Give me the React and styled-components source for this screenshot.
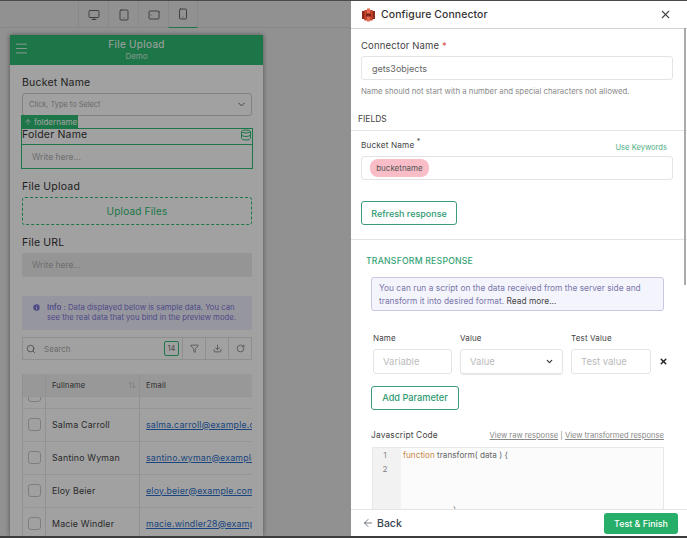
import React from 'react'
import styled, { createGlobalStyle } from 'styled-components'
import {
  Monitor, Tablet, Smartphone, Menu, ChevronDown, ArrowUp, Database, Search,
  Info, Filter, Download, RotateCw, ArrowLeft, X, ArrowUpDown,
} from 'lucide-react'

const GlobalStyle = createGlobalStyle`
  html, body { margin: 0; padding: 0; background: #fff; }
  * { box-sizing: border-box; }
  body { font-family: Inter, "Open Sans", "Liberation Sans", sans-serif; }
`

const Screen = styled.div`
  display: flex;
  width: 687px;
  height: 538px;
  overflow: hidden;
  border-top: 1px solid #4a4a4a;
  border-bottom: 2px solid #3c3c3c;
`

/* left side, the builder behind the drawer */
const Builder = styled.div`
  position: relative;
  flex: 0 0 351px;
  display: flex;
  flex-direction: column;
  background: #e6e6e6;
  overflow: hidden;
`
const Dim = styled.div`
  position: absolute;
  inset: 0;
  background: rgba(0, 0, 0, 0.37);
`
const Toolbar = styled.div`
  display: flex;
  flex: 0 0 27px;
  padding-left: 78px;
  border-bottom: 1px solid #d6d6d6;
`
const DeviceTab = styled.div`
  width: 30px;
  display: flex;
  align-items: center;
  justify-content: center;
  color: #666;
  border-left: 1px solid #dadada;
  border-right: ${p => (p.$active ? '1px solid #dadada' : 'none')};
  border-bottom: ${p => (p.$active ? '1px solid #2dbc72' : 'none')};
  margin-bottom: -1px;
`
const LandscapeIcon = styled(Tablet)`
  transform: rotate(90deg);
`
const AppCard = styled.div`
  width: 253px;
  margin: 7px 0 0 10px;
  flex: 1;
  background: #fff;
  box-shadow: 0 0 5px rgba(0, 0, 0, 0.45);
  overflow: hidden;
`
const AppHeader = styled.div`
  position: relative;
  height: 30px;
  background: #2dbc72;
  color: #fff;
  text-align: center;
  padding-top: 3px;
`
const HeaderMenu = styled(Menu)`
  position: absolute;
  left: 4px;
  top: 6px;
`
const AppTitle = styled.div`
  font-size: 10px;
  line-height: 13px;
  letter-spacing: 0.3px;
`
const AppSub = styled.div`
  font-size: 8px;
  line-height: 10px;
  opacity: 0.75;
`
const AppBody = styled.div`
  display: flex;
  flex-direction: column;
  padding: 10px 11px 0 12px;
`
const FieldLabel = styled.div`
  padding-top: 1px;
  font-size: 10.5px;
  line-height: 14px;
  letter-spacing: 0.2px;
  color: #333;
  margin-bottom: 3px;
`
const SelectBox = styled.div`
  height: 23px;
  border: 1px solid #ccc;
  border-radius: 3px;
  display: flex;
  align-items: center;
  justify-content: space-between;
  padding: 0 4px 0 6px;
  font-size: 7.4px;
  color: #aaa;
`
const SelectedWrap = styled.div`
  position: relative;
  margin: 12px -1px 10px -1px;
  border: 1px solid #2dbc72;
  height: 41px;
`
const Tag = styled.div`
  position: absolute;
  left: -1px;
  top: -14px;
  height: 13px;
  width: 57px;
  background: #2dbc72;
  color: #fff;
  display: flex;
  align-items: center;
  gap: 2px;
  padding-left: 3px;
  font-size: 8px;
`
const DbIcon = styled(Database)`
  position: absolute;
  right: 0;
  top: 0;
  color: #2dbc72;
`
const SelectedLabel = styled(FieldLabel)`
  margin: -2px 0 2px 0;
`
const WriteInput = styled.div`
  height: ${p => p.$h || 24}px;
  border-top: ${p => (p.$plain ? '0' : '1px solid #2dbc72')};
  background: ${p => (p.$disabled ? '#ececec' : 'transparent')};
  border-radius: ${p => (p.$disabled ? '2px' : '0')};
  display: flex;
  align-items: center;
  padding-left: 10px;
  font-size: 8.5px;
  color: #b0b0b0;
`
const UploadBox = styled.div`
  height: 28px;
  border: 1px dashed #2dbc72;
  border-radius: 3px;
  display: flex;
  align-items: center;
  justify-content: center;
  color: #2dbc72;
  font-size: 10px;
  letter-spacing: 0.2px;
  margin-bottom: 10px;
`
const SampleNote = styled.div`
  display: flex;
  gap: 6px;
  margin-top: 19px;
  height: 34px;
  padding: 7px 8px 0 10px;
  background: #eeeefc;
  color: #7c75d8;
  font-size: 7.7px;
  line-height: 10px;
  letter-spacing: 0.02px;
  strong { font-weight: 600; }
`
const NoteIcon = styled(Info)`
  flex: none;
`
const SearchBar = styled.div`
  display: flex;
  align-items: center;
  height: 23px;
  margin-top: 7px;
  border: 1px solid #e3e3e3;
  color: #777;
`
const SearchIcon = styled(Search)`
  margin: 0 6px 0 3px;
`
const SearchText = styled.div`
  flex: 1;
  font-size: 8px;
  color: #aaa;
  padding-left: 2px;
`
const CountBadge = styled.div`
  width: 15px;
  height: 15px;
  margin-right: 3px;
  border: 1px solid #2dbc72;
  border-radius: 2px;
  font-size: 7.5px;
  display: flex;
  align-items: center;
  justify-content: center;
`
const BarButton = styled.div`
  width: 23px;
  height: 100%;
  display: flex;
  align-items: center;
  justify-content: center;
  border-left: 1px solid #e3e3e3;
`
const Table = styled.div`
  margin-top: 14px;
  width: 230px;
  border-left: 1px solid #e6e6e6;
  overflow: hidden;
`
const Row = styled.div`
  display: grid;
  grid-template-columns: 22px 94px 113px;
  height: ${p => p.$h}px;
  background: ${p => (p.$head ? '#f1f1f1' : 'transparent')};
  border-bottom: 1px solid #ececec;
`
const Cell = styled.div`
  display: flex;
  align-items: center;
  justify-content: ${p => (p.$check ? 'center' : 'flex-start')};
  padding-left: ${p => (p.$check ? 0 : 6)}px;
  padding-right: ${p => (p.$sort ? 3 : 0)}px;
  padding-bottom: ${p => (p.$head ? 0 : 2)}px;
  font-size: ${p => (p.$head ? 7.5 : 8.8)}px;
  letter-spacing: 0.2px;
  color: #444;
  white-space: nowrap;
  overflow: hidden;
  border-left: ${p => (p.$check ? 'none' : '1px solid #e6e6e6')};
  a { color: #2c6fc9; text-decoration: underline; }
`
const HeadName = styled.span`
  flex: 1;
`
const SortIcon = styled(ArrowUpDown)`
  color: #c4c4c4;
`
const CheckBox = styled.div`
  width: 13px;
  height: 13px;
  border: 1px solid #c8c8c8;
  border-radius: 3px;
  margin-top: ${p => p.$cut || 0}px;
`

/* right side, the drawer */
const Drawer = styled.div`
  position: relative;
  flex: 1;
  display: flex;
  flex-direction: column;
  background: #fff;
  color: #444;
`
const DrawerHead = styled.div`
  flex: 0 0 28px;
  display: flex;
  align-items: center;
  padding: 0 15px 0 11px;
  border-bottom: 1px solid #d2d2d2;
`
const DrawerTitle = styled.div`
  flex: 1;
  margin-left: 6px;
  font-size: 10.4px;
  font-weight: 500;
  letter-spacing: 0.12px;
  color: #333;
`
const Scroller = styled.div`
  flex: 1;
  overflow: hidden;
  display: flex;
  flex-direction: column;
`
const ScrollThumb = styled.div`
  position: absolute;
  right: 1px;
  top: 27px;
  width: 2px;
  height: 257px;
  background: #aaa;
`
const Section = styled.div`
  padding: ${p => p.$pad || '0 14px 0 10px'};
  border-bottom: ${p => (p.$line ? '1px solid #e4e4e4' : 'none')};
`
const Label = styled.div`
  font-size: ${p => p.$size || 10}px;
  line-height: 13px;
  letter-spacing: 0.15px;
  color: #444;
  margin-bottom: ${p => p.$gap || 0}px;
  em { color: #e05050; font-style: normal; }
  sup { font-size: 7px; line-height: 0; }
`
const TextBox = styled.div`
  height: 24px;
  border: 1px solid #e4e4e4;
  border-radius: 3px;
  display: flex;
  align-items: center;
  padding-left: ${p => p.$left || 10}px;
  font-size: 9px;
  color: #666;
`
const Hint = styled.div`
  margin-top: 6px;
  font-size: 7.8px;
  line-height: 11px;
  color: #8a8a8a;
  white-space: nowrap;
`
const FieldsTitle = styled.div`
  margin-top: 17px;
  padding: 0 0 5px 7px;
  font-size: 8.5px;
  line-height: 11px;
  color: #444;
  border-bottom: 1px solid #e4e4e4;
`
const BucketHead = styled.div`
  display: flex;
  justify-content: space-between;
  align-items: flex-end;
  margin: 8px 6px 4px 0;
`
const KeywordLink = styled.div`
  font-size: 7.6px;
  color: #4fae86;
`
const Chip = styled.div`
  width: 59px;
  height: 18px;
  display: flex;
  align-items: center;
  justify-content: center;
  border-radius: 8px;
  background: #f9bdc8;
  font-size: 8px;
  color: #555;
`
const OutlineButton = styled.div`
  display: inline-flex;
  align-items: center;
  justify-content: center;
  width: ${p => p.$w}px;
  height: 24px;
  margin-top: ${p => p.$top || 0}px;
  border: 1px solid #3d9b78;
  border-radius: 3px;
  color: #2f9a70;
  font-size: ${p => p.$size}px;
  font-weight: 500;
`
const TransformTitle = styled.div`
  margin: 15px 0 10px 15px;
  font-size: 8.7px;
  line-height: 12px;
  font-weight: 500;
  letter-spacing: 0.2px;
  color: #37a377;
`
const ScriptNote = styled.div`
  margin-left: 20px;
  width: 293px;
  height: 34px;
  padding: 4px 7px;
  border: 1px solid #c9c7e2;
  border-radius: 3px;
  background: #f4f4fd;
  color: #7b78a8;
  font-size: 8.4px;
  line-height: 12.5px;
  span { color: #444; }
`
const ParamGrid = styled.div`
  display: grid;
  grid-template-columns: 79px 103px 80px 20px;
  column-gap: 8px;
  align-items: center;
  margin: 21px 0 11px 22px;
`
const ParamBox = styled.div`
  height: 25px;
  border: 1px solid #e4e4e4;
  border-radius: 3px;
  display: flex;
  align-items: center;
  justify-content: space-between;
  padding: 0 8px 0 9px;
  font-size: 9.5px;
  color: #bbb;
  box-shadow: ${p => (p.$select ? '0 1px 1px rgba(0,0,0,.1)' : 'none')};
`
const SelectArrow = styled(ChevronDown)`
  color: #333;
`
const RemoveIcon = styled(X)`
  margin-top: -1px;
  color: #222;
`
const ParamAction = styled.div`
  margin-left: 20px;
`
const CodeHead = styled.div`
  display: flex;
  justify-content: space-between;
  align-items: center;
  margin: 19px 23px 5px 20px;
`
const ViewLinks = styled.div`
  font-size: 7.6px;
  color: #888;
  a { color: #888; text-decoration: underline; }
`
const Editor = styled.div`
  margin-left: 21px;
  width: 292px;
  flex: 1;
  display: flex;
  border: 1px solid #e8e8e8;
  background: #fbfbfb;
  font-size: 8.2px;
`
const Gutter = styled.div`
  width: 28px;
  background: #f2f2f2;
  color: #888;
  text-align: center;
  line-height: 14px;
  padding: 0 4px 0 0;
`
const CodeLines = styled.div`
  padding-left: 2px;
  line-height: 14px;
  color: #666;
  b { font-weight: 400; color: #c98a4a; }
`
const ClosingBrace = styled.div`
  margin: 41px 0 0 50px;
`
const DrawerFoot = styled.div`
  position: relative;
  flex: 0 0 27px;
  display: flex;
  align-items: center;
  justify-content: space-between;
  padding: 0 9px 0 11px;
  background: #fff;
  border-top: 1px solid #e4e4e4;
`
const BackLink = styled.div`
  display: flex;
  align-items: center;
  gap: 3px;
  font-size: 10.5px;
  font-weight: 500;
  color: #3a4250;
`
const FinishButton = styled.div`
  width: 74px;
  height: 21px;
  border-radius: 3px;
  background: #27ae68;
  color: #fff;
  font-size: 8.9px;
  font-weight: 500;
  display: flex;
  align-items: center;
  justify-content: center;
`

const rows = [
  ['Salma Carroll', 'salma.carroll@example.com'],
  ['Santino Wyman', 'santino.wyman@example.com'],
  ['Eloy Beier', 'eloy.beier@example.com'],
  ['Macie Windler', 'macie.windler28@example.com'],
]

function BucketLogo() {
  return (
    <svg width="13" height="14" viewBox="0 0 13 14">
      <path d="M2.5 2 L10.5 2 L12 7 L10.5 12.5 L2.5 12.5 L1 7 Z" fill="#c8432b" />
      <rect x="0" y="3" width="2.4" height="8" fill="#8c2a1c" />
      <rect x="10.6" y="3" width="2.4" height="8" fill="#8c2a1c" />
      <rect x="5" y="0.5" width="3" height="13" fill="#e26a50" />
      <rect x="4" y="5.5" width="5" height="3" fill="#7d2416" />
    </svg>
  )
}

function LeftPane() {
  return (
    <Builder>
      <Toolbar>
        <DeviceTab><Monitor size={12} /></DeviceTab>
        <DeviceTab><Tablet size={12} /></DeviceTab>
        <DeviceTab><LandscapeIcon size={12} /></DeviceTab>
        <DeviceTab $active><Smartphone size={12} /></DeviceTab>
      </Toolbar>
      <AppCard>
        <AppHeader>
          <HeaderMenu size={15} strokeWidth={1.3} />
          <AppTitle>File Upload</AppTitle>
          <AppSub>Demo</AppSub>
        </AppHeader>
        <AppBody>
          <FieldLabel>Bucket Name</FieldLabel>
          <SelectBox>
            Click, Type to Select
            <ChevronDown size={11} color="#555" />
          </SelectBox>
          <SelectedWrap>
            <Tag><ArrowUp size={8} />foldername</Tag>
            <DbIcon size={12} />
            <SelectedLabel>Folder Name</SelectedLabel>
            <WriteInput>Write here...</WriteInput>
          </SelectedWrap>
          <FieldLabel>File Upload</FieldLabel>
          <UploadBox>Upload Files</UploadBox>
          <FieldLabel>File URL</FieldLabel>
          <WriteInput $plain $disabled>Write here...</WriteInput>
          <SampleNote>
            <NoteIcon size={9} fill="#7c75d8" color="#fff" />
            <div><strong>Info</strong> : Data displayed below is sample data. You can see the real data that you bind in the preview mode.</div>
          </SampleNote>
          <SearchBar>
            <SearchIcon size={10} />
            <SearchText>Search</SearchText>
            <CountBadge>14</CountBadge>
            <BarButton><Filter size={9} /></BarButton>
            <BarButton><Download size={9} /></BarButton>
            <BarButton><RotateCw size={9} /></BarButton>
          </SearchBar>
          <Table>
            <Row $head $h={23}>
              <Cell $check $head />
              <Cell $head $sort>
                <HeadName>Fullname</HeadName>
                <SortIcon size={8} />
              </Cell>
              <Cell $head>Email</Cell>
            </Row>
            <Row $h={12}>
              <Cell $check><CheckBox $cut={-13} /></Cell>
              <Cell />
              <Cell />
            </Row>
            {rows.map(([name, email]) => (
              <Row $h={33} key={name}>
                <Cell $check><CheckBox /></Cell>
                <Cell>{name}</Cell>
                <Cell><a>{email}</a></Cell>
              </Row>
            ))}
          </Table>
        </AppBody>
      </AppCard>
      <Dim />
    </Builder>
  )
}

function RightPane() {
  return (
    <Drawer>
      <DrawerHead>
        <BucketLogo />
        <DrawerTitle>Configure Connector</DrawerTitle>
        <X size={13} color="#444" />
      </DrawerHead>
      <Scroller>
        <Section $pad="10px 14px 0 10px">
          <Label $size={9.5} $gap={4}>Connector Name <em>*</em></Label>
          <TextBox>gets3objects</TextBox>
          <Hint>Name should not start with a number and special characters not allowed.</Hint>
        </Section>
        <FieldsTitle>FIELDS</FieldsTitle>
        <Section $pad="0 14px 14px 10px" $line>
          <BucketHead>
            <Label $size={8.2}>Bucket Name <sup>*</sup></Label>
            <KeywordLink>Use Keywords</KeywordLink>
          </BucketHead>
          <TextBox $left={8}><Chip>bucketname</Chip></TextBox>
          <OutlineButton $w={96} $size={9} $top={21}>Refresh response</OutlineButton>
        </Section>
        <TransformTitle>TRANSFORM RESPONSE</TransformTitle>
        <ScriptNote>
          You can run a script on the data received from the server side and transform it into desired format. <span>Read more...</span>
        </ScriptNote>
        <ParamGrid>
          <Label $size={8} $gap={4}>Name</Label>
          <Label $size={8} $gap={4}>Value</Label>
          <Label $size={8} $gap={4}>Test Value</Label>
          <div />
          <ParamBox>Variable</ParamBox>
          <ParamBox $select>Value<SelectArrow size={9} strokeWidth={3} /></ParamBox>
          <ParamBox>Test value</ParamBox>
          <RemoveIcon size={9} strokeWidth={4} />
        </ParamGrid>
        <ParamAction><OutlineButton $w={88} $size={9.2}>Add Parameter</OutlineButton></ParamAction>
        <CodeHead>
          <Label $size={8.4}>Javascript Code</Label>
          <ViewLinks><a>View raw response</a> | <a>View transformed response</a></ViewLinks>
        </CodeHead>
        <Editor>
          <Gutter>1<br />2</Gutter>
          <CodeLines>
            <b>function</b> transform( data ) {'{'}
            <ClosingBrace>{'}'}</ClosingBrace>
          </CodeLines>
        </Editor>
      </Scroller>
      <ScrollThumb />
      <DrawerFoot>
        <BackLink><ArrowLeft size={12} strokeWidth={1.4} />Back</BackLink>
        <FinishButton>Test &amp; Finish</FinishButton>
      </DrawerFoot>
    </Drawer>
  )
}

export default function App() {
  return (
    <Screen>
      <GlobalStyle />
      <LeftPane />
      <RightPane />
    </Screen>
  )
}
